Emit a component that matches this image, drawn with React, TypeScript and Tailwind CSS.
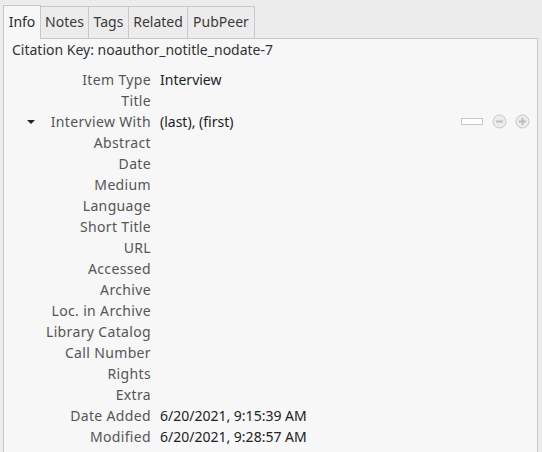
import React from "react";

const tabs = [
  { name: "Info", w: "w-[38px]" },
  { name: "Notes", w: "w-[49px]" },
  { name: "Tags", w: "w-[41px]" },
  { name: "Related", w: "w-[60px]" },
  { name: "PubPeer", w: "w-[68px]" },
];

const rows: { label: string; value?: string; creator?: boolean }[] = [
  { label: "Item Type", value: "Interview" },
  { label: "Title" },
  { label: "Interview With", value: "(last), (first)", creator: true },
  { label: "Abstract" },
  { label: "Date" },
  { label: "Medium" },
  { label: "Language" },
  { label: "Short Title" },
  { label: "URL" },
  { label: "Accessed" },
  { label: "Archive" },
  { label: "Loc. in Archive" },
  { label: "Library Catalog" },
  { label: "Call Number" },
  { label: "Rights" },
  { label: "Extra" },
  { label: "Date Added", value: "6/20/2021, 9:15:39 AM" },
  { label: "Modified", value: "6/20/2021, 9:28:57 AM" },
];

const CircleButton = ({ plus }: { plus?: boolean }) => (
  <svg width="15" height="15" viewBox="0 0 15 15">
    <circle cx="7.5" cy="7.5" r="6.5" fill="#ececec" stroke="#c9c9c9" />
    <rect x="4" y="6.5" width="7" height="2" fill="#bdbdbd" />
    {plus && <rect x="6.5" y="4" width="2" height="7" fill="#bdbdbd" />}
  </svg>
);

export default function App() {
  return (
    <div
      className="h-[452px] w-[542px] overflow-hidden bg-[#ececec] pl-[3px] pr-[4px] pt-[5px] text-[14px] text-[#3c3c3c]"
      style={{ fontFamily: '"Noto Sans", "Open Sans", sans-serif' }}
    >
      <div className="flex items-end">
        {tabs.map((t, i) =>
          i === 0 ? (
            <div
              key={t.name}
              className={`relative z-10 -mb-px flex h-[34px] justify-center border border-b-0 border-[#c8c8c8] bg-[#f7f7f7] pt-[5px] text-[#2e2e2e] ${t.w}`}
            >
              {t.name}
            </div>
          ) : (
            <div
              key={t.name}
              className={`-ml-px flex h-[32px] justify-center border border-b-0 border-[#c8c8c8] bg-[#ececec] pt-[4px] text-[#3a3a3a] ${t.w}`}
            >
              {t.name}
            </div>
          )
        )}
      </div>
      <div className="h-[420px] border border-[#c8c8c8] bg-[#f7f7f7] pt-[1px]">
        <div className="h-[20px] pl-[8px] leading-[20px] text-[#333]">
          Citation Key: noauthor_notitle_nodate-7
        </div>
        <div className="mt-[9px] flex flex-col">
          {rows.map((r) => (
            <div key={r.label} className="flex h-[21px] items-center">
              <div className="relative flex w-[147px] justify-end tracking-[0.35px] text-[#555]">
                {r.creator && (
                  <span className="absolute left-[23px] top-[9px] h-0 w-0 border-x-[4px] border-t-[4px] border-x-transparent border-t-[#222]" />
                )}
                {r.label}
              </div>
              <div className="ml-[9px] flex-1 text-[#222]">{r.value}</div>
              {r.creator && (
                <div className="mr-[7px] flex items-center gap-[8px]">
                  <div className="mr-[1px] h-[7px] w-[22px] border border-[#c8c8c8] bg-white" />
                  <CircleButton />
                  <CircleButton plus />
                </div>
              )}
            </div>
          ))}
        </div>
      </div>
    </div>
  );
}
